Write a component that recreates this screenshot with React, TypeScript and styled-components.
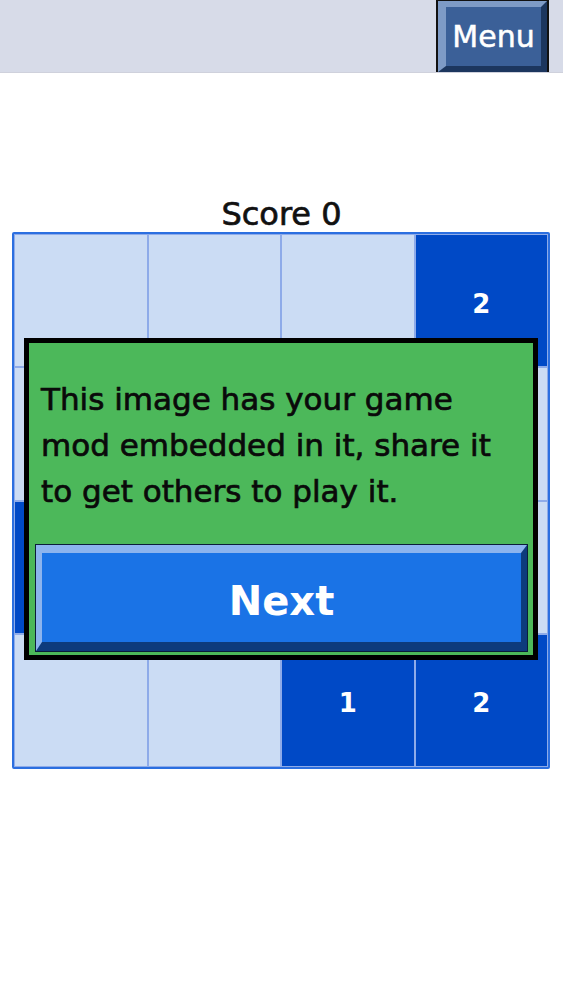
import { FC } from 'react';
import styled, { createGlobalStyle } from 'styled-components';

const FONT = `"Comic Sans MS", "DejaVu Sans", sans-serif`;

const GlobalStyle = createGlobalStyle`
  html, body {
    margin: 0;
    padding: 0;
    background: #ffffff;
  }
  body {
    font-family: ${FONT};
  }
`;

// 0 = empty slot, anything else is a numbered tile
const BOARD: number[][] = [
  [0, 0, 0, 2],
  [0, 0, 0, 0],
  [1, 0, 0, 0],
  [0, 0, 1, 2],
];

const App: FC = () => {
  return (
    <Page>
      <GlobalStyle />
      <Header>
        <MenuButton>Menu</MenuButton>
      </Header>
      <Score>Score 0</Score>
      <Board>
        {BOARD.flat().map((value, i) => (
          <Cell key={i} filled={value > 0}>
            {value > 0 ? value : ''}
          </Cell>
        ))}
        <Dialog>
          <Message>
            This image has your game
            <br />
            mod embedded in it, share it
            <br />
            to get others to play it.
          </Message>
          <NextButton>Next</NextButton>
        </Dialog>
      </Board>
    </Page>
  );
};

const Page = styled.div`
  display: flex;
  flex-direction: column;
  min-height: 1000px;
`;

const Header = styled.div`
  display: flex;
  justify-content: flex-end;
  align-items: flex-end;
  height: 73px;
  background: #d7dbe8;
  border-bottom: 1px solid #cfd1dc;
  box-sizing: border-box;
  overflow: hidden;
`;

const MenuButton = styled.div`
  display: flex;
  align-items: center;
  justify-content: center;
  width: 109px;
  height: 71px;
  margin: 0 16px 0 0;
  box-sizing: border-box;
  background: #3b6098;
  border-style: solid;
  border-width: 6px 6px 6px 8px;
  border-color: #7e9bc6 #1c365e #1c365e #7e9bc6;
  box-shadow: 0 0 0 2px #111;
  color: #ffffff;
  font-family: ${FONT};
  font-size: 30px;
  line-height: 1;
  -webkit-text-stroke: 0.5px #ffffff;
`;

const Score = styled.div`
  margin-top: 123px;
  text-align: center;
  font-size: 32px;
  line-height: 36px;
  color: #111;
  -webkit-text-stroke: 0.7px #111;
`;

const Board = styled.div`
  position: relative;
  display: grid;
  grid-template-columns: repeat(4, 1fr);
  grid-template-rows: repeat(4, 1fr);
  width: 538px;
  height: 537px;
  margin: 0 0 0 12px;
  box-sizing: border-box;
  border: 2px solid #2b6fe0;
  border-radius: 2px;
  background: #cbdcf4;
`;

const Cell = styled.div<{ filled: boolean }>`
  display: flex;
  align-items: center;
  justify-content: center;
  padding-top: 6px;
  border: 1px solid #8eabe9;
  background: ${({ filled }) => (filled ? '#0049c6' : '#cbdcf4')};
  color: #ffffff;
  font-weight: 700;
  font-size: 26px;
`;

const Dialog = styled.div`
  position: absolute;
  left: 10px;
  top: 104px;
  width: 514px;
  height: 322px;
  box-sizing: border-box;
  display: flex;
  flex-direction: column;
  justify-content: space-between;
  padding: 33px 6px 4px 7px;
  background: #4cb85a;
  border: 5px solid #000;
`;

const Message = styled.div`
  padding-left: 5px;
  font-size: 31px;
  line-height: 46px;
  color: #0a0a0a;
  -webkit-text-stroke: 0.7px #0a0a0a;
`;

const NextButton = styled.div`
  display: flex;
  align-items: center;
  justify-content: center;
  height: 106px;
  padding-top: 6px;
  box-sizing: border-box;
  background: #1a73e6;
  border-style: solid;
  border-width: 8px 6px 9px 6px;
  border-color: #8cb4ee #0d3b7c #0d3b7c #8cb4ee;
  box-shadow: 0 0 0 1px #0b1d3a;
  color: #ffffff;
  font-weight: 700;
  font-size: 40px;
`;

export default App;
